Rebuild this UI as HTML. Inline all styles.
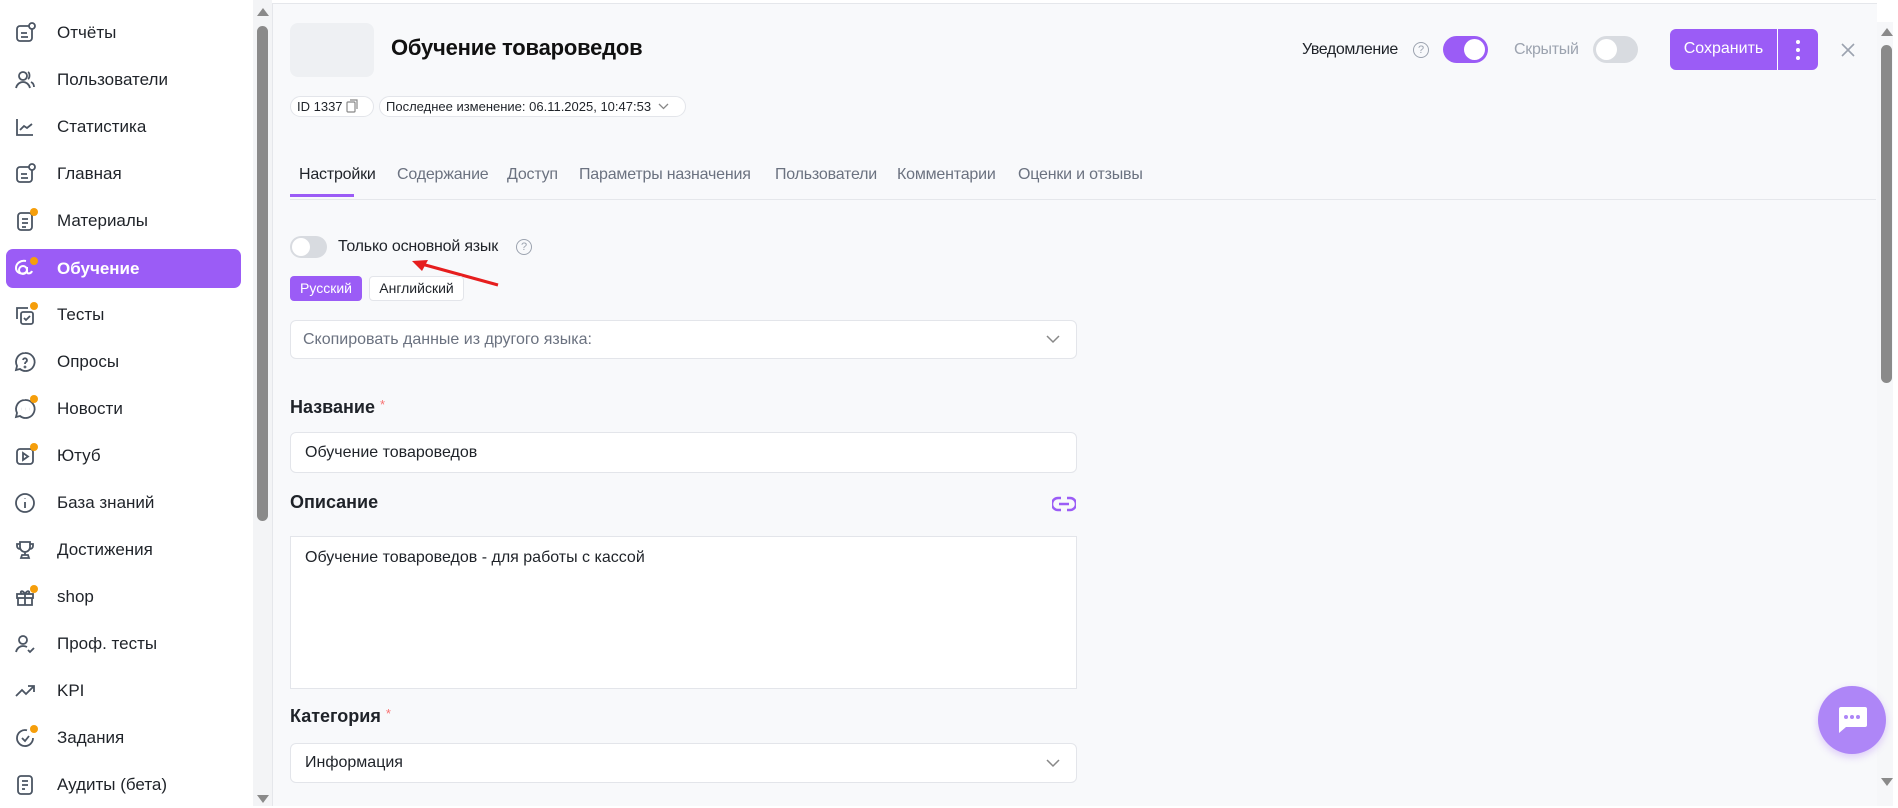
<!DOCTYPE html>
<html><head><meta charset="utf-8"><style>
*{box-sizing:border-box;margin:0;padding:0}
body{width:1898px;height:806px;overflow:hidden;background:#fff;font-family:"Liberation Sans",sans-serif;color:#1f2329;position:relative}
.abs{position:absolute;white-space:nowrap}
.nav{position:absolute;left:0;width:253px;height:47px;display:flex;align-items:center;font-size:17px;color:#1f2329}
.nav .ic{position:absolute;left:13px;top:12px;width:24px;height:24px}
.nav span{position:absolute;left:57px}
.nav.act{left:6px;width:235px;height:39px;background:#9b5cf6;border-radius:7px;color:#fff;font-weight:bold}
.nav.act .ic{left:7px;top:8px}
.nav.act span{left:51px}
.dot{position:absolute;width:8px;height:8px;border-radius:50%;background:#f59e0b}
.main{position:absolute;left:272px;top:3px;width:1605px;height:803px;background:#f8f9fb;border-top:1px solid #e5e7eb;border-left:1px solid #e5e7eb}
.tab{position:absolute;top:166px;font-size:16px;letter-spacing:-0.2px;color:#6b7280;white-space:nowrap}
.box{position:absolute;left:290px;width:787px;background:#fff;border:1px solid #e3e5ea;border-radius:6px}
.lbl{position:absolute;left:290px;font-size:18px;font-weight:bold;color:#1f2329}
.lbl i{color:#f87171;font-style:normal;font-weight:normal;font-size:13px;vertical-align:top;margin-left:5px}
.tg{position:absolute;border-radius:14px}
.tg b{position:absolute;top:3px;width:21px;height:21px;border-radius:50%;background:#fff}
</style></head><body>
<!-- sidebar -->
<div class="nav" style="top:9px"><svg class="ic" viewBox="0 0 24 24" fill="none" stroke="#4b5563" stroke-width="1.8"><rect x="4" y="5" width="15" height="15" rx="3"/><path d="M8 12h6M8 16h7"/><circle cx="19" cy="5" r="3" fill="#fff"/></svg><span>Отчёты</span></div>
<div class="nav" style="top:56px"><svg class="ic" viewBox="0 0 24 24" fill="none" stroke="#4b5563" stroke-width="1.8"><circle cx="10" cy="8" r="4"/><path d="M3 20c1-4 4-6 7-6s6 2 7 6M15 4c2 1 2 6 0 7M18 14c2 1 3 3 3 5"/></svg><span>Пользователи</span></div>
<div class="nav" style="top:103px"><svg class="ic" viewBox="0 0 24 24" fill="none" stroke="#4b5563" stroke-width="1.8"><path d="M4 4v16h16M7 15l4-4 3 2 5-4"/></svg><span>Статистика</span></div>
<div class="nav" style="top:150px"><svg class="ic" viewBox="0 0 24 24" fill="none" stroke="#4b5563" stroke-width="1.8"><rect x="4" y="5" width="15" height="15" rx="3"/><path d="M8 12h6M8 16h7"/><circle cx="19" cy="5" r="3" fill="#fff"/></svg><span>Главная</span></div>
<div class="nav" style="top:197px"><svg class="ic" viewBox="0 0 24 24" fill="none" stroke="#4b5563" stroke-width="1.8"><rect x="5" y="4" width="14" height="17" rx="3"/><path d="M9 10h6M9 14h6M9 18h4"/></svg><div class="dot" style="left:30px;top:11px"></div><span>Материалы</span></div>
<div class="nav act" style="top:249px"><svg class="ic" viewBox="0 0 24 24" fill="none" stroke="#fff" stroke-width="2"><circle cx="10" cy="13" r="4"/><path d="M14 13c0 5-11 5-11-2 0-5 5-8 10-7"/><path d="M14 10v5c0 2 4 2 5-1"/></svg><div class="dot" style="left:24px;top:8px"></div><span>Обучение</span></div>
<div class="nav" style="top:291px"><svg class="ic" viewBox="0 0 24 24" fill="none" stroke="#4b5563" stroke-width="1.8"><path d="M4 16V5h11"/><rect x="8" y="9" width="12" height="12" rx="2"/><path d="M11 15l2 2 4-4"/></svg><div class="dot" style="left:30px;top:11px"></div><span>Тесты</span></div>
<div class="nav" style="top:338px"><svg class="ic" viewBox="0 0 24 24" fill="none" stroke="#4b5563" stroke-width="1.8"><path d="M12 3a9 9 0 1 1-5 16l-4 1 1-4A9 9 0 0 1 12 3z"/><path d="M10 10a2 2 0 1 1 3 2c-1 .5-1 1-1 2"/><circle cx="12" cy="17" r=".5"/></svg><span>Опросы</span></div>
<div class="nav" style="top:385px"><svg class="ic" viewBox="0 0 24 24" fill="none" stroke="#4b5563" stroke-width="1.8"><path d="M12 3a9 9 0 1 1-5 16l-4 1 1-4A9 9 0 0 1 12 3z"/><path d="M8 12h.1M12 12h.1M16 12h.1" stroke-width="2.5"/></svg><div class="dot" style="left:30px;top:10px"></div><span>Новости</span></div>
<div class="nav" style="top:432px"><svg class="ic" viewBox="0 0 24 24" fill="none" stroke="#4b5563" stroke-width="1.8"><rect x="4" y="5" width="16" height="15" rx="3"/><path d="M10 9v7l5-3.5z"/></svg><div class="dot" style="left:30px;top:11px"></div><span>Ютуб</span></div>
<div class="nav" style="top:479px"><svg class="ic" viewBox="0 0 24 24" fill="none" stroke="#4b5563" stroke-width="1.8"><circle cx="12" cy="12" r="9"/><path d="M12 11v6M12 7.5v.5"/></svg><span>База знаний</span></div>
<div class="nav" style="top:526px"><svg class="ic" viewBox="0 0 24 24" fill="none" stroke="#4b5563" stroke-width="1.8"><path d="M7 4h10v5a5 5 0 0 1-10 0zM7 6H4v2a3 3 0 0 0 3 3M17 6h3v2a3 3 0 0 1-3 3M12 14v3M8 20h8l-1-3H9z"/></svg><span>Достижения</span></div>
<div class="nav" style="top:573px"><svg class="ic" viewBox="0 0 24 24" fill="none" stroke="#4b5563" stroke-width="1.8"><rect x="4" y="9" width="16" height="4"/><path d="M5 13v7h14v-7M12 9v11M12 9C9 4 6 7 9 9M12 9c3-5 6-2 3 0"/></svg><div class="dot" style="left:30px;top:12px"></div><span>shop</span></div>
<div class="nav" style="top:620px"><svg class="ic" viewBox="0 0 24 24" fill="none" stroke="#4b5563" stroke-width="1.8"><circle cx="10" cy="8" r="4"/><path d="M3 20c1-4 4-6 7-6 2 0 3 .5 4 1M15 18l2 2 4-4"/></svg><span>Проф. тесты</span></div>
<div class="nav" style="top:667px"><svg class="ic" viewBox="0 0 24 24" fill="none" stroke="#4b5563" stroke-width="1.8"><path d="M3 17l6-6 4 4 8-8M15 7h6v6"/></svg><span>KPI</span></div>
<div class="nav" style="top:714px"><svg class="ic" viewBox="0 0 24 24" fill="none" stroke="#4b5563" stroke-width="1.8"><path d="M20 12a8 8 0 1 1-6-7.7"/><path d="M9 12l3 3 4-5"/></svg><div class="dot" style="left:30px;top:11px"></div><span>Задания</span></div>
<div class="nav" style="top:761px"><svg class="ic" viewBox="0 0 24 24" fill="none" stroke="#4b5563" stroke-width="1.8"><rect x="5" y="3" width="14" height="18" rx="3"/><path d="M9 8h6M9 12h6M9 16h3"/></svg><span>Аудиты (бета)</span></div>
<!-- sidebar scrollbar -->
<div class="abs" style="left:253px;top:0;width:19px;height:806px;background:#f3f4f6"></div>
<div class="abs" style="left:257px;top:8px;width:0;height:0;border-left:6px solid transparent;border-right:6px solid transparent;border-bottom:8px solid #8a8a8a"></div>
<div class="abs" style="left:257px;top:26px;width:11px;height:495px;background:#8a8a8a;border-radius:6px"></div>
<div class="abs" style="left:257px;top:795px;width:0;height:0;border-left:6px solid transparent;border-right:6px solid transparent;border-top:8px solid #8a8a8a"></div>
<!-- main -->
<div class="main"></div>
<div class="abs" style="left:290px;top:23px;width:84px;height:54px;background:#eef0f3;border-radius:8px"></div>
<div class="abs" style="left:391px;top:35px;font-size:22px;font-weight:bold;color:#111;letter-spacing:-0.2px">Обучение товароведов</div>
<div class="abs" style="left:290px;top:96px;width:84px;height:21px;border:1px solid #e3e5ea;border-radius:11px;background:#fff;font-size:13px;line-height:19px;padding-left:6px">ID 1337 <svg width="12" height="14" viewBox="0 0 12 14" style="vertical-align:-2px" fill="none" stroke="#888" stroke-width="1.2"><rect x="1" y="3" width="8" height="10" rx="1"/><path d="M4 1h7v9"/></svg></div>
<div class="abs" style="left:379px;top:96px;width:307px;height:21px;border:1px solid #e3e5ea;border-radius:11px;background:#fff;font-size:13px;line-height:19px;padding-left:6px">Последнее изменение: 06.11.2025, 10:47:53 <svg width="11" height="7" fill="none" stroke="#888" stroke-width="1.3" style="vertical-align:1px;margin-left:3px"><path d="M1 1l4.5 4.5L10 1"/></svg></div>
<!-- tabs -->
<div class="tab" style="left:299px;color:#1f2329">Настройки</div>
<div class="tab" style="left:397px">Содержание</div>
<div class="tab" style="left:507px">Доступ</div>
<div class="tab" style="left:579px">Параметры назначения</div>
<div class="tab" style="left:775px">Пользователи</div>
<div class="tab" style="left:897px">Комментарии</div>
<div class="tab" style="left:1018px">Оценки и отзывы</div>
<div class="abs" style="left:290px;top:199px;width:1586px;height:1px;background:#e5e7eb"></div>
<div class="abs" style="left:290px;top:194px;width:64px;height:3px;background:#9b5cf6"></div>
<!-- toggle -->
<div class="tg" style="left:290px;top:236px;width:37px;height:22px;background:#d8dbe0"><b style="left:2px;top:2px;width:18px;height:18px"></b></div>
<div class="abs" style="left:338px;top:238px;font-size:16px;letter-spacing:-0.2px">Только основной язык</div>
<div class="abs" style="left:516px;top:239px;width:16px;height:16px;border:1.5px solid #9ca3af;border-radius:50%;font-size:11px;color:#9ca3af;text-align:center;line-height:14px">?</div>
<svg class="abs" style="left:400px;top:255px" width="110" height="40"><path d="M98 30L18 8" stroke="#e61e1e" stroke-width="3"/><path d="M12 6l16-1-6 11z" fill="#e61e1e"/></svg>
<div class="abs" style="left:290px;top:276px;width:72px;height:25px;background:#9b5cf6;border-radius:4px;color:#fff;font-size:14px;text-align:center;line-height:25px">Русский</div>
<div class="abs" style="left:369px;top:276px;width:95px;height:25px;background:#fff;border:1px solid #e3e5ea;border-radius:4px;font-size:14px;text-align:center;line-height:23px">Английский</div>
<div class="box" style="top:320px;height:39px;font-size:16px;color:#6b7280;line-height:37px;padding-left:12px">Скопировать данные из другого языка:<svg style="position:absolute;right:16px;top:14px" width="14" height="9" fill="none" stroke="#888" stroke-width="1.5"><path d="M1 1l6 6 6-6"/></svg></div>
<div class="lbl" style="top:397px">Название<i>*</i></div>
<div class="box" style="top:432px;height:41px;font-size:16px;line-height:39px;padding-left:14px">Обучение товароведов</div>
<div class="lbl" style="top:492px">Описание</div>
<svg class="abs" style="left:1052px;top:496px" width="24" height="16" fill="none" stroke="#9b5cf6" stroke-width="2.4"><path d="M9 2H6a6 6 0 0 0 0 12h3M15 2h3a6 6 0 0 1 0 12h-3M7 8h10"/></svg>
<div class="box" style="top:536px;height:153px;border-radius:0;font-size:16px;padding:12px 14px">Обучение товароведов - для работы с кассой</div>
<div class="lbl" style="top:706px">Категория<i>*</i></div>
<div class="box" style="top:743px;height:40px;font-size:16px;line-height:38px;padding-left:14px">Информация<svg style="position:absolute;right:16px;top:15px" width="14" height="9" fill="none" stroke="#888" stroke-width="1.5"><path d="M1 1l6 6 6-6"/></svg></div>
<!-- header right -->
<div class="abs" style="left:1302px;top:41px;font-size:16px;letter-spacing:-0.4px">Уведомление</div>
<div class="abs" style="left:1413px;top:42px;width:16px;height:16px;border:1.5px solid #9ca3af;border-radius:50%;font-size:11px;color:#9ca3af;text-align:center;line-height:14px">?</div>
<div class="tg" style="left:1443px;top:36px;width:45px;height:27px;background:#9b5cf6"><b style="left:21px"></b></div>
<div class="abs" style="left:1514px;top:41px;font-size:16px;letter-spacing:-0.3px;color:#9ca3af">Скрытый</div>
<div class="tg" style="left:1593px;top:36px;width:45px;height:27px;background:#d8dbe0"><b style="left:3px"></b></div>
<div class="abs" style="left:1670px;top:29px;width:148px;height:41px;background:#9b5cf6;border-radius:6px"></div>
<div class="abs" style="left:1670px;top:40px;width:107px;text-align:center;color:#fff;font-size:16px">Сохранить</div>
<div class="abs" style="left:1777px;top:29px;width:1px;height:41px;background:#fff"></div>
<div class="abs" style="left:1796px;top:40px;width:4px;height:4px;border-radius:50%;background:#fff;box-shadow:0 8px 0 #fff,0 16px 0 #fff"></div>
<svg class="abs" style="left:1841px;top:43px" width="14" height="14" stroke="#9ca3af" stroke-width="1.6"><path d="M1 1l12 12M13 1L1 13"/></svg>
<!-- right scrollbar -->
<div class="abs" style="left:1877px;top:22px;width:16px;height:784px;background:#f6f7f9"></div>
<div class="abs" style="left:1881px;top:28px;width:0;height:0;border-left:6px solid transparent;border-right:6px solid transparent;border-bottom:8px solid #8a8a8a"></div>
<div class="abs" style="left:1881px;top:45px;width:11px;height:338px;background:#8a8a8a;border-radius:6px"></div>
<div class="abs" style="left:1881px;top:778px;width:0;height:0;border-left:6px solid transparent;border-right:6px solid transparent;border-top:8px solid #8a8a8a"></div>
<!-- chat -->
<div class="abs" style="left:1818px;top:686px;width:68px;height:68px;border-radius:50%;background:#ae86f7;box-shadow:0 3px 8px rgba(155,92,246,.3)"></div>
<svg class="abs" style="left:1835px;top:704px" width="34" height="34" viewBox="0 0 34 34"><path d="M4 3h26a2 2 0 0 1 2 2v16a2 2 0 0 1-2 2H11l-7 6V5a2 2 0 0 1 2-2z" fill="#fff"/><circle cx="11" cy="13" r="2" fill="#ae86f7"/><circle cx="17" cy="13" r="2" fill="#ae86f7"/><circle cx="23" cy="13" r="2" fill="#ae86f7"/></svg>
</body></html>
